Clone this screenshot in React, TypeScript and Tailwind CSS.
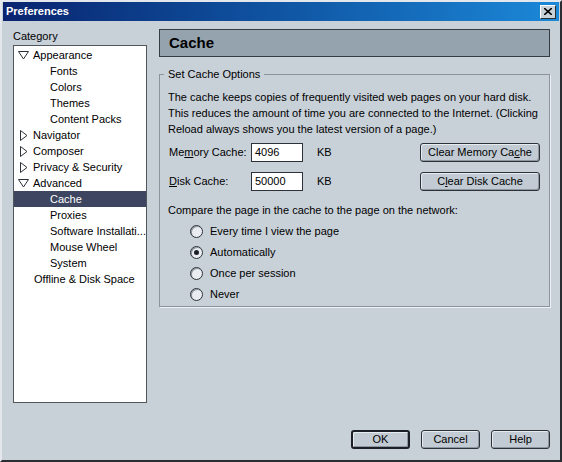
import React from 'react';

type Node = { label: string; depth: 0 | 1 | 2; twisty?: 'open' | 'closed'; selected?: boolean };

const TREE: Node[] = [
  { label: 'Appearance', depth: 0, twisty: 'open' },
  { label: 'Fonts', depth: 1 },
  { label: 'Colors', depth: 1 },
  { label: 'Themes', depth: 1 },
  { label: 'Content Packs', depth: 1 },
  { label: 'Navigator', depth: 0, twisty: 'closed' },
  { label: 'Composer', depth: 0, twisty: 'closed' },
  { label: 'Privacy & Security', depth: 0, twisty: 'closed' },
  { label: 'Advanced', depth: 0, twisty: 'open' },
  { label: 'Cache', depth: 1, selected: true },
  { label: 'Proxies', depth: 1 },
  { label: 'Software Installati...', depth: 1 },
  { label: 'Mouse Wheel', depth: 1 },
  { label: 'System', depth: 1 },
  { label: 'Offline & Disk Space', depth: 2 },
];

const RADIOS = ['Every time I view the page', 'Automatically', 'Once per session', 'Never'];

function Twisty({ open }: { open: boolean }) {
  return open ? (
    <svg width="11" height="9" viewBox="0 0 11 9" className="shrink-0">
      <path d="M0.5 0.5 H10.5 L5.5 8 Z" fill="#fff" stroke="#2a3038" />
    </svg>
  ) : (
    <svg width="8" height="11" viewBox="0 0 8 11" className="shrink-0">
      <path d="M0.5 0.5 V10.5 L7 5.5 Z" fill="#fff" stroke="#2a3038" />
    </svg>
  );
}

function Btn({ children, w, def }: { children: React.ReactNode; w: string; def?: boolean }) {
  return (
    <button
      className={`${w} h-[19px] rounded-[3px] bg-[#c2cbd3] text-[11px] text-black flex items-center justify-center shadow-[inset_1px_1px_0_#e6ebef,inset_-1px_-1px_0_#8e979f] ${
        def ? 'border-2 border-[#1c2026]' : 'border border-[#2c3238]'
      }`}
    >
      {children}
    </button>
  );
}

function Radio({ checked }: { checked: boolean }) {
  return (
    <span className="w-[13px] h-[13px] rounded-full border border-[#2c3238] bg-[#e9edf1] flex items-center justify-center shadow-[inset_1px_1px_0_#8e979f]">
      {checked && <span className="w-[5px] h-[5px] rounded-full bg-[#1c2026]" />}
    </span>
  );
}

export default function App() {
  return (
    <div
      className="w-[562px] h-[462px] bg-[#c8d0d8] flex flex-col border-t-2 border-l-2 border-t-[#e4e8ec] border-l-[#e4e8ec] border-r-2 border-b-2 border-r-[#2a2e33] border-b-[#2a2e33] text-[11px] text-black"
      style={{ fontFamily: '"Liberation Sans", Arial, sans-serif' }}
    >
      <div className="h-[19px] mx-[1px] flex items-center justify-between pl-[3px] pr-[3px] bg-gradient-to-r from-[#0a2470] to-[#1c88d8]">
        <span className="text-white font-bold text-[11px]">Preferences</span>
        <span className="w-[16px] h-[14px] bg-[#c8d0d8] border border-t-white border-l-white border-r-[#2a2e33] border-b-[#2a2e33] flex items-center justify-center">
          <svg width="8" height="7" viewBox="0 0 8 7">
            <path d="M0 0 L8 7 M8 0 L0 7" stroke="#000" strokeWidth="1.6" />
          </svg>
        </span>
      </div>

      <div className="flex gap-[12px] pl-[11px] pt-[8px]">
        <div className="w-[134px] flex flex-col">
          <div className="h-[16px] leading-[14px]">Category</div>
          <div className="h-[358px] border border-[#4e565e] bg-white pt-[1px] overflow-hidden">
            {TREE.map((n) => (
              <div
                key={n.label}
                className={`h-[16px] flex items-center whitespace-nowrap ${
                  n.selected ? 'bg-[#3d4560] text-white' : ''
                } ${n.depth === 1 ? 'pl-[36px]' : n.depth === 2 ? 'pl-[20px]' : n.twisty === 'open' ? 'pl-[4px]' : 'pl-[6px]'}`}
              >
                {n.twisty && <Twisty open={n.twisty === 'open'} />}
                <span className={n.twisty ? (n.twisty === 'open' ? 'ml-[4px]' : 'ml-[5px]') : ''}>{n.label}</span>
              </div>
            ))}
          </div>
        </div>

        <div className="w-[391px] flex flex-col">
          <div className="h-[28px] border border-[#343c44] bg-[#95a3ae] flex items-center pl-[9px] text-[15px] font-bold">
            Cache
          </div>

          <fieldset className="mt-[10px] border border-[#8c959e] shadow-[1px_1px_0_#eef1f4] px-[8px] pb-[10px] h-[240px]">
            <legend className="-ml-[4px] px-[4px] leading-[14px]">Set Cache Options</legend>
            <p className="leading-[16px] mt-[8px]">
              The cache keeps copies of frequently visited web pages on your hard disk.
              <br />
              This reduces the amount of time you are connected to the Internet. (Clicking
              <br />
              Reload always shows you the latest version of a page.)
            </p>

            <div className="mt-[6px] flex items-center h-[19px]">
              <span className="w-[83px] pl-[1px]">
                Me<span className="underline">m</span>ory Cache:
              </span>
              <span className="w-[52px] h-[19px] border border-[#2c3238] bg-white pl-[3px] flex items-center">4096</span>
              <span className="ml-[14px]">KB</span>
              <span className="ml-auto mr-[1px]">
                <Btn w="w-[120px]">
                  Clear Memory Ca<span className="underline">c</span>he
                </Btn>
              </span>
            </div>

            <div className="mt-[10px] flex items-center h-[19px]">
              <span className="w-[83px] pl-[1px]">
                <span className="underline">D</span>isk Cache:
              </span>
              <span className="w-[52px] h-[19px] border border-[#2c3238] bg-white pl-[3px] flex items-center">50000</span>
              <span className="ml-[14px]">KB</span>
              <span className="ml-auto mr-[1px]">
                <Btn w="w-[120px]">
                  C<span className="underline">l</span>ear Disk Cache
                </Btn>
              </span>
            </div>

            <div className="mt-[12px] leading-[14px]">Compare the page in the cache to the page on the network:</div>

            <div className="mt-[4px] flex flex-col">
              {RADIOS.map((r, i) => (
                <div key={r} className="h-[21px] flex items-center pl-[22px] gap-[7px]">
                  <Radio checked={i === 1} />
                  <span>{r}</span>
                </div>
              ))}
            </div>
          </fieldset>
        </div>
      </div>

      <div className="mt-auto mb-[11px] flex justify-end gap-[11px] pr-[10px]">
        <Btn w="w-[59px]" def>
          OK
        </Btn>
        <Btn w="w-[59px]">Cancel</Btn>
        <Btn w="w-[59px]">Help</Btn>
      </div>
    </div>
  );
}
